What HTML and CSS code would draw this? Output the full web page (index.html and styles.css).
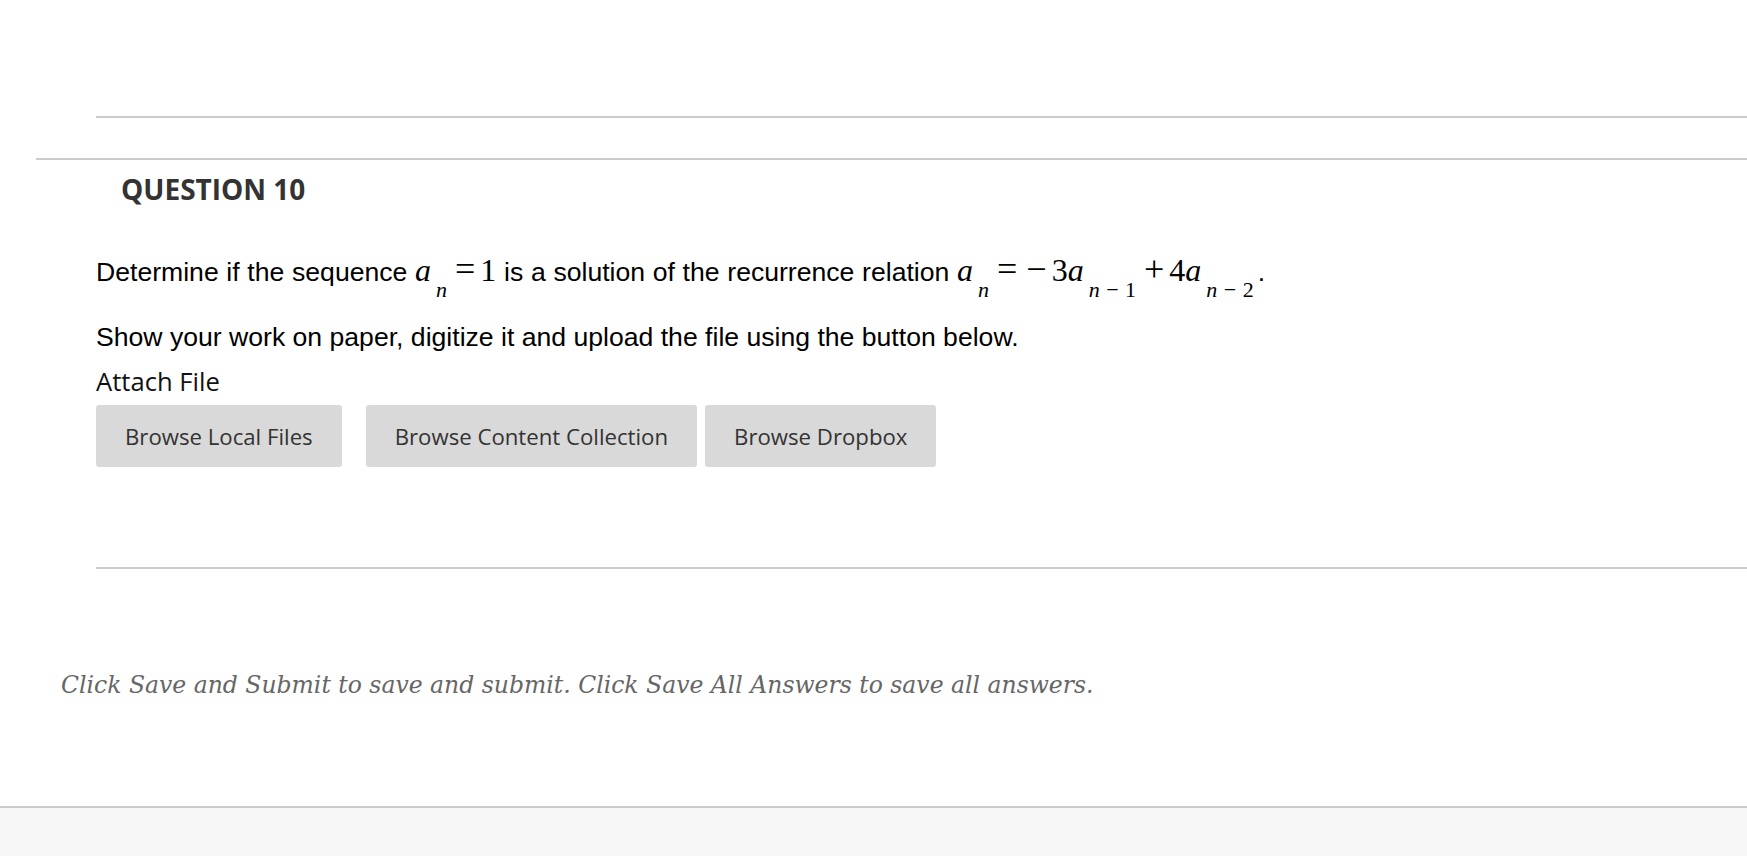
FILE: index.html
```html
<!DOCTYPE html>
<html lang="en">
<head>
<meta charset="utf-8">
<title>Question 10</title>
<link rel="stylesheet" href="styles.css">
</head>
<body>
<div class="page">
  <div class="rule rule-top"></div>
  <div class="rule rule-question"></div>
  <section class="question">
    <h2 class="q-title">QUESTION 10</h2>
    <div class="q-body">
      <p class="q-text">Determine if the sequence <span class="math"><i class="mv">a</i><sub class="ms">n</sub><span class="mo">=</span>1</span> is a solution of the recurrence relation <span class="math"><i class="mv">a</i><sub class="ms">n</sub><span class="mo">=</span><span class="mo">−</span>3<i class="mv">a</i><sub class="ms">n <span class="mn">− 1</span></sub><span class="mo">+</span>4<i class="mv">a</i><sub class="ms">n <span class="mn">− 2</span></sub></span>.</p>
      <p class="q-note">Show your work on paper, digitize it and upload the file using the button below.</p>
      <div class="attach">
        <div class="attach-label">Attach File</div>
        <div class="attach-buttons">
          <button class="btn btn-local" type="button">Browse Local Files</button>
          <button class="btn" type="button">Browse Content Collection</button>
          <button class="btn" type="button">Browse Dropbox</button>
        </div>
      </div>
    </div>
  </section>
  <div class="rule rule-bottom"></div>
  <p class="submit-note">Click Save and Submit to save and submit. Click Save All Answers to save all answers.</p>
</div>
<footer class="footer"></footer>
</body>
</html>
```

FILE: styles.css
```css
html, body {
  margin: 0;
  padding: 0;
  background: #ffffff;
}
body {
  font-family: "Liberation Sans", Arial, sans-serif;
  color: #000;
  min-height: 856px;
  display: flex;
  flex-direction: column;
}
.page {
  height: 806px;
  flex: none;
  display: flex;
  flex-direction: column;
}
.rule {
  border-top: 2px solid #cccccc;
}
.rule-top {
  margin: 116px 0 0 96px;
}
.rule-question {
  margin: 40px 0 0 36px;
}
.q-title {
  margin: 10px 0 0 121px;
  font-family: "Open Sans", sans-serif;
  font-weight: 700;
  font-size: 28px;
  line-height: 38px;
  color: #333333;
}
.q-body {
  padding-left: 96px;
}
.q-text {
  margin: 46px 0 0 0;
  font-size: 26.6px;
  line-height: 36px;
  word-spacing: 0.3px;
}
.math {
  font-family: "Liberation Serif", "Times New Roman", serif;
  font-size: 32px;
  line-height: 1;
  word-spacing: 0;
}
.mv {
  font-style: italic;
}
.ms {
  font-style: italic;
  font-size: 22px;
  vertical-align: -16px;
  line-height: 0;
  margin: 0 4px 0 5px;
  word-spacing: 1px;
}
.mn {
  font-style: normal;
}
.mo {
  font-size: 36px;
  line-height: 0;
  margin: 0 5px 0 4px;
}
.q-note {
  margin: 29px 0 0 0;
  font-size: 26.6px;
  line-height: 36px;
}
.attach-label {
  margin-top: 9px;
  font-family: "Open Sans", sans-serif;
  font-size: 25.6px;
  line-height: 36px;
  color: #111;
}
.attach-buttons {
  display: flex;
  gap: 8px;
  margin-top: 5px;
}
.btn {
  height: 62px;
  padding: 0 29px;
  border: none;
  border-radius: 3px;
  background: #d9d9d9;
  font-family: "Open Sans", sans-serif;
  font-size: 22.2px;
  color: #333333;
}
.btn-local {
  margin-right: 16px;
}
.rule-bottom {
  margin: 100px 0 0 96px;
}
.submit-note {
  margin: 100px 0 0 61px;
  font-family: "DejaVu Serif", Georgia, serif;
  font-style: italic;
  font-size: 23.5px;
  line-height: 32px;
  color: #666666;
}
.footer {
  flex: 1;
  border-top: 2px solid #cccccc;
  background: #f7f7f7;
}
```
